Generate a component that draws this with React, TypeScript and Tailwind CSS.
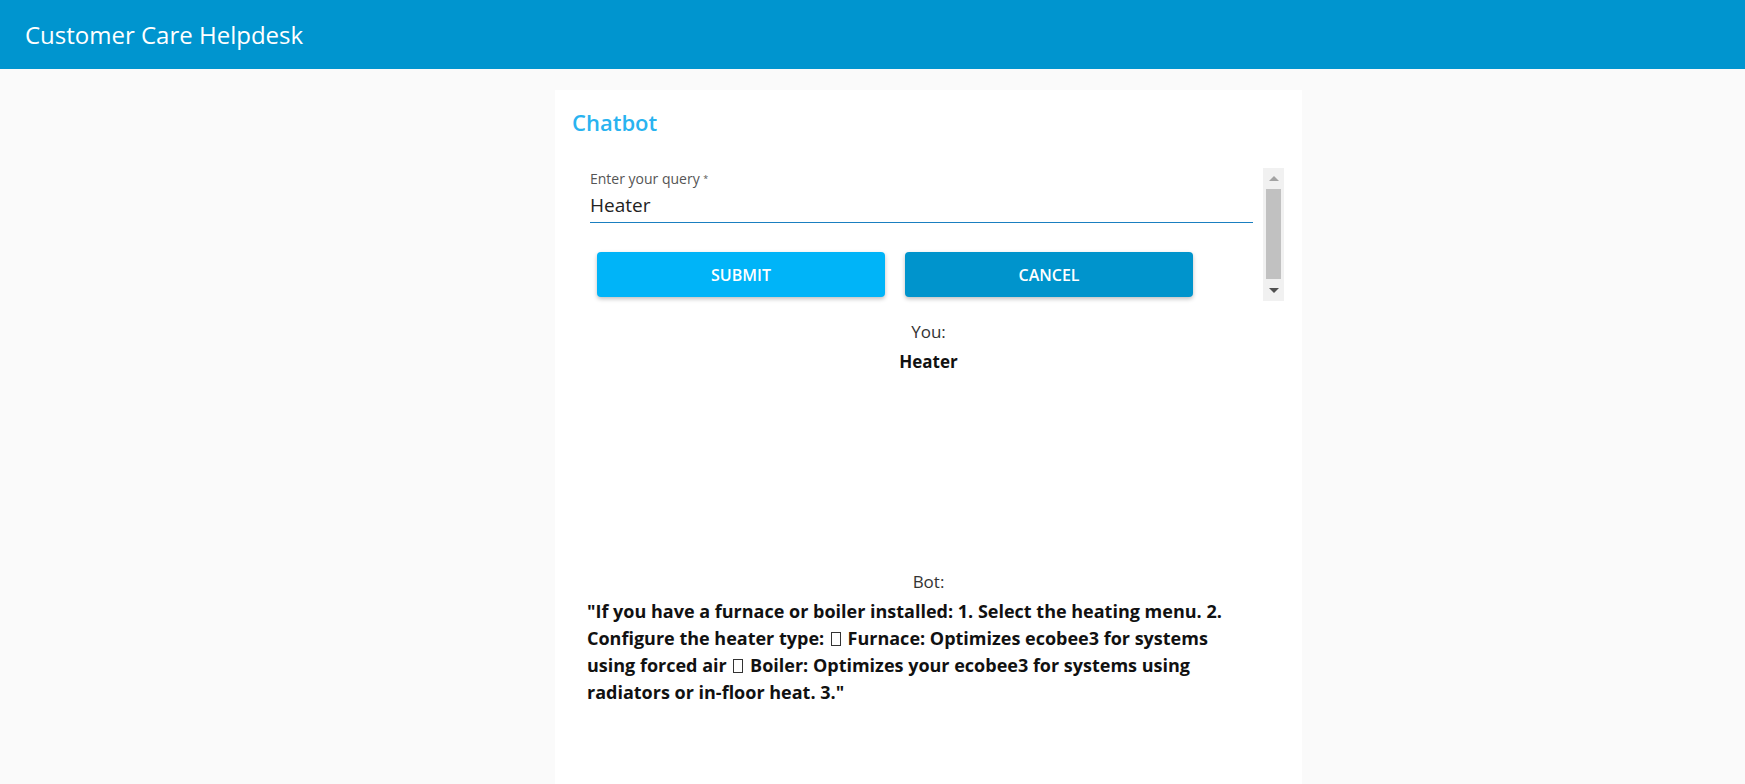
import React from 'react';

const font = { fontFamily: '"Open Sans", "Noto Sans", sans-serif' };

const ScrollBar = () => (
  <div className="flex h-[133px] w-[21px] shrink-0 flex-col bg-[#f1f1f1]">
    <div className="flex h-[21px] items-center justify-center">
      <div className="h-0 w-0 border-x-[5px] border-b-[5px] border-x-transparent border-b-[#a3a3a3]" />
    </div>
    <div className="mx-[3px] flex-1 bg-[#c1c1c1]" />
    <div className="flex h-[22px] items-center justify-center">
      <div className="h-0 w-0 border-x-[5px] border-t-[5px] border-x-transparent border-t-[#505050]" />
    </div>
  </div>
);

// missing-glyph box, as the bot's text shows it
const Tofu = () => (
  <span className="mx-[2px] inline-block h-[14px] w-[10px] border border-[#333] align-[-1px]" />
);

const QueryForm = () => (
  <div className="mt-[30px] flex w-[712px]">
    <div className="flex-1 pt-[2px]">
      <div className="ml-[18px] mr-[10px]">
        <label className="block text-[14px] leading-[18px] text-[#555]">
          Enter your query <span className="align-top text-[9px]">*</span>
        </label>
        <div className="border-b border-[#1a7fc0] pb-[5px] pt-[5px] text-[19px] leading-[24px] text-[#222]">
          Heater
        </div>
      </div>
      <div className="ml-[25px] mt-[29px] flex gap-[20px]">
        <button
          type="button"
          className="h-[45px] w-[288px] rounded-[4px] bg-[#00b4f8] text-[16px] font-semibold uppercase text-white shadow-[0_2px_4px_rgba(0,0,0,0.25)]"
        >
          Submit
        </button>
        <button
          type="button"
          className="h-[45px] w-[288px] rounded-[4px] bg-[#0094cc] text-[16px] font-semibold uppercase text-white shadow-[0_2px_4px_rgba(0,0,0,0.25)]"
        >
          Cancel
        </button>
      </div>
    </div>
    <ScrollBar />
  </div>
);

export default function App() {
  return (
    <div className="min-h-screen bg-[#fafafa]" style={font}>
      <header className="flex h-[69px] items-center bg-[#0095cf] px-[25px] text-[24px] text-white">
        Customer Care Helpdesk
      </header>

      <main className="pl-[555px] pt-[21px]">
        <div className="h-[700px] w-[747px] bg-white px-[17px] pt-[16px]">
          <h2 className="text-[22px] font-semibold leading-[32px] text-[#29b3f0]">Chatbot</h2>

          <QueryForm />

          <div className="mt-[19px] text-center text-[17px] leading-[24px] text-[#333]">You:</div>
          <div className="mt-[6px] text-center text-[17px] font-bold leading-[24px] text-[#111]">Heater</div>

          <div className="mt-[196px] text-center text-[17px] leading-[24px] text-[#333]">Bot:</div>
          <p className="ml-[15px] mt-[4px] w-[670px] text-[18px] font-bold leading-[27px] text-[#111]">
            "If you have a furnace or boiler installed: 1. Select the heating menu. 2. Configure the heater
            type: <Tofu /> Furnace: Optimizes ecobee3 for systems using forced air <Tofu /> Boiler: Optimizes your
            ecobee3 for systems using radiators or in-floor heat. 3."
          </p>
        </div>
      </main>
    </div>
  );
}
